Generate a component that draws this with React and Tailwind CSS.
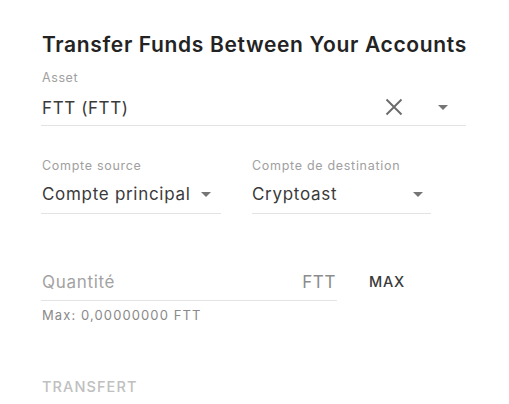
import React from 'react';

function DropArrow() {
  return (
    <svg viewBox="0 0 24 24" className="w-6 h-6 fill-[#757575]">
      <path d="M7 10l5 5 5-5z" />
    </svg>
  );
}

function ClearIcon() {
  return (
    <svg viewBox="0 0 24 24" className="w-6 h-6 stroke-[#6b6b6b]" strokeWidth="1.9" fill="none">
      <path d="M4.5 4.5l15 15M19.5 4.5l-15 15" />
    </svg>
  );
}

export default function App() {
  return (
    <div className="min-h-screen bg-white font-['Inter','Liberation_Sans',sans-serif] text-[#3a3a3a]">
      <div className="w-[425px] ml-[41px] pt-[31px]">
        <h2 className="text-[21px] leading-[28px] font-semibold tracking-[0.65px] text-[#232323] pl-px whitespace-nowrap">
          Transfer Funds Between Your Accounts
        </h2>

        {/* Asset */}
        <div className="mt-[11px]">
          <div className="text-[12.5px] leading-4 tracking-[0.6px] text-[#a0a0a0] pl-px">Asset</div>
          <div className="mt-[10px] flex items-start border-b border-[#e3e3e3] pb-[5px] pl-px">
            <span className="flex-1 text-[17px] leading-6 tracking-[0.6px] text-[#3a3a3a]">FTT (FTT)</span>
            <div className="flex items-center h-6 pb-[3px]">
              <ClearIcon />
              <div className="w-[25px]" />
              <DropArrow />
              <div className="w-[11px]" />
            </div>
          </div>
        </div>

        {/* Accounts */}
        <div className="mt-[32px] flex gap-[31px]">
          <div className="w-[180px]">
            <div className="text-[12.5px] leading-4 tracking-[0.7px] text-[#a0a0a0] pl-px whitespace-nowrap">Compte source</div>
            <div className="mt-[8px] flex items-start border-b border-[#e3e3e3] pb-[7px] pl-px">
              <span className="flex-1 text-[17px] leading-6 tracking-[0.7px] text-[#3a3a3a] whitespace-nowrap">Compte principal</span>
              <div className="flex items-center h-6 mr-[3px] pb-[1px]">
                <DropArrow />
              </div>
            </div>
          </div>
          <div className="w-[179px]">
            <div className="text-[12.5px] leading-4 tracking-[0.7px] text-[#a0a0a0] whitespace-nowrap">Compte de destination</div>
            <div className="mt-[8px] flex items-start border-b border-[#e3e3e3] pb-[7px]">
              <span className="flex-1 text-[17px] leading-6 tracking-[0.7px] text-[#3a3a3a]">Cryptoast</span>
              <div className="flex items-center h-6 mr-px">
                <DropArrow />
              </div>
            </div>
          </div>
        </div>

        {/* Amount */}
        <div className="mt-[56px] flex items-start">
          <div className="w-[296px]">
            <div className="flex items-start border-b border-[#e3e3e3] pb-[6px] pl-px">
              <span className="flex-1 text-[17px] leading-6 tracking-[0.7px] text-[#a3a3a3]">Quantité</span>
              <span className="text-[17px] leading-6 tracking-[0.6px] text-[#8c8c8c] mr-px">FTT</span>
            </div>
            <div className="mt-[6px] text-[13px] leading-4 tracking-[1.1px] text-[#8a8a8a] pl-px whitespace-nowrap">Max: 0,00000000 FTT</div>
          </div>
          <button className="ml-[32px] text-[14.5px] leading-6 font-medium tracking-[0.8px] text-[#3a3a3a]">
            MAX
          </button>
        </div>

        <button className="mt-[52px] pl-px text-[14.5px] leading-6 font-medium tracking-[1.1px] text-[#c0c0c0]">
          TRANSFERT
        </button>
      </div>
    </div>
  );
}
